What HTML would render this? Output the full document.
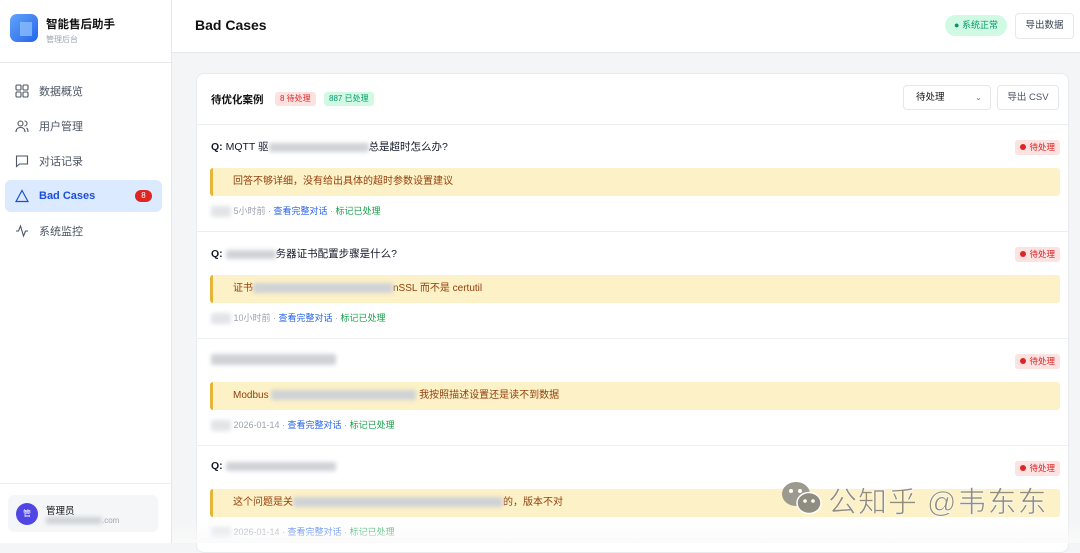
<!DOCTYPE html>
<html><head><meta charset="utf-8"><style>
*{box-sizing:border-box;margin:0;padding:0}
body{width:1080px;height:543px;overflow:hidden;font-family:"Liberation Sans","Noto Sans CJK SC",sans-serif;background:#f4f5f7;position:relative;color:#1f2937}
.sb{position:absolute;left:0;top:0;width:172px;height:543px;background:#fff;border-right:1px solid #e5e7eb}
.abs{position:absolute}
.nav{position:absolute;left:5px;width:157px;height:32px;border-radius:6px;font-size:11px;color:#4b5563;display:flex;align-items:center;padding-left:10px}
.nav svg{margin-right:10px}
.hdr{position:absolute;left:172px;top:0;width:908px;height:53px;background:#fff;border-bottom:1px solid #e5e7eb}
.card{position:absolute;left:196px;top:73px;width:873px;height:480px;background:#fff;border:1px solid #e8eaee;border-radius:8px;overflow:hidden}
.item{position:absolute;left:0;width:873px;height:107px;border-top:1px solid #eceef1}
.q{position:absolute;left:14px;top:14px;font-size:10.5px;color:#111827}
.q b{font-weight:700}
.yb{position:absolute;left:13px;top:43px;width:850px;height:28px;background:#fdf1c7;border-left:3px solid #e5b53a;border-radius:3px;font-size:10px;color:#92400e;padding-left:20px;line-height:28px}
.meta{position:absolute;left:14px;top:79px;font-size:9px;color:#9ca3af}
.meta .a{color:#2563eb}.meta .g{color:#16a34a}
.badge{position:absolute;right:10px;top:15px;height:15px;padding:0 5px;background:#fde2e2;color:#dc2626;font-size:8.5px;border-radius:3px;line-height:15px}
.badge:before{content:"";display:inline-block;width:6px;height:6px;border-radius:50%;background:#dc2626;margin-right:3px;vertical-align:0}
.blur{display:inline-block;background:#cfd2d6;filter:blur(2px);vertical-align:middle;border-radius:2px}
</style></head><body>
<div class="sb">
  <div class="abs" style="left:10px;top:14px;width:28px;height:28px;border-radius:7px;background:linear-gradient(135deg,#60a5fa,#2563eb)"><div class="abs" style="left:10px;top:8px;width:12px;height:14px;background:#93c5fd;opacity:.7"></div></div>
  <div class="abs" style="left:46px;top:16px;font-size:11.5px;font-weight:700;color:#111">智能售后助手</div>
  <div class="abs" style="left:46px;top:34px;font-size:8px;color:#9ca3af">管理后台</div>
  <div class="abs" style="left:0;top:62px;width:171px;height:1px;background:#e5e7eb"></div>
  <div class="nav" style="top:75px"><svg width="14" height="14" viewBox="0 0 14 14" fill="none" stroke="#4b5563" stroke-width="1.1"><rect x="1" y="1" width="5" height="5" rx="1"/><rect x="8" y="1" width="5" height="5" rx="1"/><rect x="1" y="8" width="5" height="5" rx="1"/><rect x="8" y="8" width="5" height="5" rx="1"/></svg>数据概览</div>
  <div class="nav" style="top:110px"><svg width="14" height="14" viewBox="0 0 14 14" fill="none" stroke="#4b5563" stroke-width="1.1"><circle cx="5.5" cy="4.5" r="2.5"/><path d="M1 13c0-3 2-4.5 4.5-4.5S10 10 10 13M9.5 2a2.5 2.5 0 010 5M11.5 9c1 .6 1.5 2 1.5 4"/></svg>用户管理</div>
  <div class="nav" style="top:145px"><svg width="14" height="14" viewBox="0 0 14 14" fill="none" stroke="#4b5563" stroke-width="1.1"><path d="M1.5 2h11v8h-8l-3 2.5z"/></svg>对话记录</div>
  <div class="nav" style="top:180px;background:#dbeafe;color:#1d4ed8;font-weight:600"><svg width="14" height="14" viewBox="0 0 14 14" fill="none" stroke="#1d4ed8" stroke-width="1.2"><path d="M7 1.5L13 12.5H1z"/></svg>Bad Cases<span style="position:absolute;right:10px;top:10px;width:17px;height:12px;border-radius:6px;background:#dc2626;color:#fff;font-size:8px;text-align:center;line-height:12px;font-weight:400">8</span></div>
  <div class="nav" style="top:215px"><svg width="14" height="14" viewBox="0 0 14 14" fill="none" stroke="#4b5563" stroke-width="1.1"><path d="M1 7h2.5l2-5 3 10 2-5H13"/></svg>系统监控</div>
  <div class="abs" style="left:0;top:483px;width:171px;height:1px;background:#eceef1"></div>
  <div class="abs" style="left:8px;top:495px;width:150px;height:37px;background:#f5f6f8;border-radius:6px">
    <div class="abs" style="left:8px;top:8px;width:22px;height:22px;border-radius:50%;background:#4f46e5;color:#fff;font-size:8px;text-align:center;line-height:22px">管</div>
    <div class="abs" style="left:38px;top:8px;font-size:9.5px;color:#111">管理员</div>
    <div class="abs" style="left:38px;top:21px;font-size:8px;color:#9ca3af"><span class="blur" style="width:56px;height:7px"></span>.com</div>
  </div>
</div>
<div class="hdr">
  <div class="abs" style="left:23px;top:17px;font-size:14px;font-weight:700;color:#111">Bad Cases</div>
  <div class="abs" style="left:773px;top:15px;width:62px;height:21px;border-radius:11px;background:#d1fae5;color:#059669;font-size:9px;line-height:21px;text-align:center">● 系统正常</div>
  <div class="abs" style="left:843px;top:13px;width:59px;height:26px;border:1px solid #e5e7eb;border-radius:4px;font-size:9.5px;color:#374151;line-height:24px;text-align:center">导出数据</div>
</div>
<div class="card">
  <div class="abs" style="left:14px;top:18px;font-size:10.5px;font-weight:700;color:#111">待优化案例</div>
  <div class="abs" style="left:78px;top:18px;height:14px;padding:0 5px;background:#fde2e2;color:#dc2626;font-size:8px;line-height:14px;border-radius:3px">8 待处理</div>
  <div class="abs" style="left:127px;top:18px;height:14px;padding:0 5px;background:#d1fae5;color:#059669;font-size:8px;line-height:14px;border-radius:3px">887 已处理</div>
  <div class="abs" style="left:706px;top:11px;width:88px;height:25px;border:1px solid #e5e7eb;border-radius:4px;font-size:9.5px;color:#111;line-height:23px;padding-left:12px">待处理<span style="position:absolute;right:8px;font-size:8px;color:#6b7280">⌄</span></div>
  <div class="abs" style="left:800px;top:11px;width:62px;height:25px;border:1px solid #e5e7eb;border-radius:4px;font-size:9.5px;color:#4b5563;line-height:23px;text-align:center">导出 CSV</div>
  <div class="item" style="top:50px"><div class="q"><b>Q:</b> MQTT 驱<span class="blur" style="width:100px;height:9px"></span>总是超时怎么办?</div><div class="badge">待处理</div><div class="yb">回答不够详细，没有给出具体的超时参数设置建议</div><div class="meta"><span class="blur" style="width:20px;height:11px;background:#e2e4e7"></span> 5小时前 · <span class="a">查看完整对话</span> · <span class="g">标记已处理</span></div></div>
  <div class="item" style="top:157px"><div class="q"><b>Q:</b> <span class="blur" style="width:50px;height:9px"></span>务器证书配置步骤是什么?</div><div class="badge">待处理</div><div class="yb">证书<span class="blur" style="width:140px;height:10px"></span>nSSL 而不是 certutil</div><div class="meta"><span class="blur" style="width:20px;height:11px;background:#e2e4e7"></span> 10小时前 · <span class="a">查看完整对话</span> · <span class="g">标记已处理</span></div></div>
  <div class="item" style="top:264px"><div class="q"><span class="blur" style="width:125px;height:11px"></span></div><div class="badge">待处理</div><div class="yb">Modbus <span class="blur" style="width:145px;height:10px"></span> 我按照描述设置还是读不到数据</div><div class="meta"><span class="blur" style="width:20px;height:11px;background:#e2e4e7"></span> 2026-01-14 · <span class="a">查看完整对话</span> · <span class="g">标记已处理</span></div></div>
  <div class="item" style="top:371px"><div class="q"><b>Q:</b> <span class="blur" style="width:110px;height:9px"></span></div><div class="badge">待处理</div><div class="yb">这个问题是关<span class="blur" style="width:210px;height:10px"></span>的，版本不对</div><div class="meta"><span class="blur" style="width:20px;height:11px;background:#e2e4e7"></span> 2026-01-14 · <span class="a">查看完整对话</span> · <span class="g">标记已处理</span></div></div>
</div>
<div class="abs" style="left:172px;top:520px;width:908px;height:23px;background:linear-gradient(rgba(255,255,255,0),rgba(250,250,250,.9))"></div>
<svg class="abs" style="left:780px;top:480px" width="44" height="36" viewBox="0 0 44 36"><ellipse cx="16" cy="14" rx="14" ry="12" fill="#9c9a8e"/><ellipse cx="29" cy="23" rx="12" ry="10.5" fill="#8f8d82" stroke="#fff" stroke-width="1.5"/><circle cx="11" cy="11" r="2" fill="#fff"/><circle cx="20" cy="11" r="2" fill="#fff"/><circle cx="25" cy="21" r="1.8" fill="#fff"/><circle cx="33" cy="21" r="1.8" fill="#fff"/></svg>
<div class="abs" style="left:828px;top:479px;font-size:29px;color:rgba(120,118,105,.8);letter-spacing:1px;-webkit-text-stroke:.6px #fff">公知乎 @韦东东</div>
</body></html>
